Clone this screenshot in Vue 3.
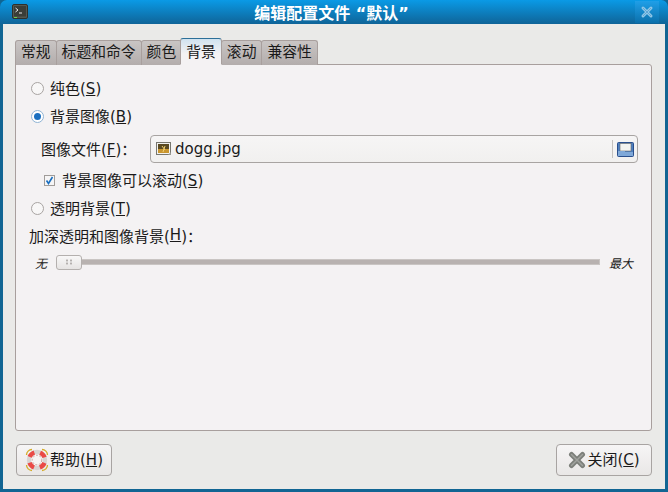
<template>
  <div class="window">
    <div class="titlebar">
      <svg class="term-icon" width="16" height="16" viewBox="0 0 16 16">
        <rect x="0.5" y="0.5" width="15" height="14" rx="1.5" fill="#55584f" stroke="#2e2f2b" />
        <rect x="2" y="2" width="12" height="10.5" fill="#3a3d38" />
        <path d="M3.5 4 L6 6 L3.5 8" fill="none" stroke="#e8e8e8" stroke-width="1" />
        <path d="M7 9 H10" stroke="#e8e8e8" stroke-width="1" />
        <rect x="2" y="13" width="3" height="1" fill="#6fd04a" />
      </svg>
      <div class="title">编辑配置文件 “默认”</div>
      <div class="close-box">
        <svg width="14" height="14" viewBox="0 0 14 14">
          <path d="M3 3 L11 11 M11 3 L3 11" stroke="#8fc6e6" stroke-width="3" stroke-linecap="round" />
          <path d="M3 3 L11 11 M11 3 L3 11" stroke="#5ea6d6" stroke-width="1" />
        </svg>
      </div>
    </div>

    <div class="body">
      <div class="tabs">
        <div
          v-for="t in tabs"
          :key="t"
          class="tab"
          :class="{ active: t === '背景' }"
        >{{ t }}</div>
      </div>

      <div class="panel">
        <div class="row radio-row">
          <span class="radio"></span>
          <span>纯色(<u>S</u>)</span>
        </div>
        <div class="row radio-row">
          <span class="radio on"></span>
          <span>背景图像(<u>B</u>)</span>
        </div>
        <div class="file-row">
          <span class="file-label">图像文件(<u>F</u>)：</span>
          <div class="entry">
            <svg class="pic-icon" width="16" height="16" viewBox="0 0 16 16">
              <rect x="0.5" y="1.5" width="14" height="12" fill="#f2f2f0" stroke="#77776f" />
              <rect x="2" y="3" width="11" height="9" fill="#5a4a22" />
              <rect x="2" y="8" width="11" height="4" fill="#c9962f" />
              <path d="M6 5 L9 9 M9 5 L7 11" stroke="#f0d070" stroke-width="1" />
              <path d="M12 14 L15 14 L15 11 Z" fill="#9a9a94" />
            </svg>
            <span class="file-name">dogg.jpg</span>
            <span class="entry-sep"></span>
            <svg class="folder-icon" width="17" height="15" viewBox="0 0 17 15">
              <rect x="0.5" y="0.5" width="16" height="14" rx="1" fill="#4d7fc0" stroke="#2a4f8c" />
              <rect x="3" y="1.5" width="11" height="7.5" fill="#f3f3f0" stroke="#6a6a66" stroke-width="0.6" />
              <path d="M1 9 H8 V10 H16 V14 H1 Z" fill="#7fa8d8" />
            </svg>
          </div>
        </div>
        <div class="row check-row">
          <svg class="check" width="11" height="11" viewBox="0 0 11 11">
            <rect x="0.5" y="0.5" width="10" height="10" fill="#f6f5f5" stroke="#a09c99" />
            <path d="M2.5 5.5 L4.5 8.5 L8.5 2" fill="none" stroke="#1a6fc0" stroke-width="1.6" />
          </svg>
          <span>背景图像可以滚动(<u>S</u>)</span>
        </div>
        <div class="row radio-row">
          <span class="radio"></span>
          <span>透明背景(<u>T</u>)</span>
        </div>
        <div class="row">加深透明和图像背景(<u>H</u>)：</div>
        <div class="slider-row">
          <span class="mark min">无</span>
          <div class="trough">
            <div class="thumb">
              <span class="grip"></span>
            </div>
          </div>
          <span class="mark max">最大</span>
        </div>
      </div>

      <div class="buttons">
        <button class="btn">
          <svg class="btn-icon" width="24" height="24" viewBox="0 0 24 24">
            <g fill="none" stroke="#d4ac2a" stroke-width="1.3">
              <path d="M1.5 7 A5.5 5.5 0 0 1 7 1.5" />
              <path d="M17 1.5 A5.5 5.5 0 0 1 22.5 7" />
              <path d="M22.5 17 A5.5 5.5 0 0 1 17 22.5" />
              <path d="M7 22.5 A5.5 5.5 0 0 1 1.5 17" />
            </g>
            <circle cx="12" cy="12" r="8" fill="#fff" stroke="#d8d4d2" stroke-width="4.4" />
            <circle cx="12" cy="12" r="8" fill="none" stroke="#ea4a46" stroke-width="4.4" stroke-dasharray="6.6 5.97" stroke-dashoffset="-2.98" />
            <circle cx="12" cy="12" r="4.8" fill="#f6f4f3" stroke="#c08a86" stroke-width="0.8" stroke-dasharray="2 1.5" />
          </svg>
          <span class="btn-text">帮助(<u>H</u>)</span>
        </button>
        <button class="btn">
          <svg class="btn-icon-x" width="18" height="18" viewBox="0 0 18 18">
            <path d="M3.5 3.5 L14.5 14.5 M14.5 3.5 L3.5 14.5" stroke="#7c7f7a" stroke-width="5" stroke-linecap="round" />
            <path d="M3.5 3.5 L14.5 14.5 M14.5 3.5 L3.5 14.5" stroke="#a0a29e" stroke-width="1.5" stroke-linecap="round" />
          </svg>
          <span class="btn-text">关闭(<u>C</u>)</span>
        </button>
      </div>
    </div>
  </div>
</template>

<script setup>
const tabs = ['常规', '标题和命令', '颜色', '背景', '滚动', '兼容性']
</script>

<style>
html,
body {
  margin: 0;
  background: #0f6593;
}
</style>

<style scoped>
.window {
  width: 668px;
  height: 492px;
  box-sizing: border-box;
  display: flex;
  flex-direction: column;
  background: #116593;
  border-radius: 7px 7px 0 0;
  overflow: hidden;
  padding: 0 3px 3px;
  font-family: "DejaVu Sans", "Noto Sans CJK SC", sans-serif;
  font-size: 15px;
  color: #1a1a1a;
}
.titlebar {
  height: 24px;
  flex: none;
  margin: 0 -3px;
  padding: 0 9px 0 12px;
  display: flex;
  align-items: center;
  background: linear-gradient(#0a9ae6, #0f6498);
  position: relative;
}
.term-icon {
  flex: none;
}
.title {
  flex: 1;
  text-align: center;
  color: #fff;
  font-weight: 700;
  font-size: 16px;
}
.close-box {
  width: 24px;
  height: 22px;
  display: flex;
  align-items: center;
  justify-content: center;
  background: linear-gradient(#1f9fe8, #0b70ab);
}
.body {
  flex: 1;
  background: #eaeae8;
  display: flex;
  flex-direction: column;
  padding: 14px 13px 0 12px;
  min-height: 0;
}
.tabs {
  display: flex;
  height: 27px;
  align-items: flex-end;
  position: relative;
  z-index: 1;
  margin-bottom: -1px;
}
.tab {
  height: 25px;
  box-sizing: border-box;
  padding: 0 5px;
  line-height: 22px;
  font-size: 14.8px;
  background: linear-gradient(#c9c5c4, #b3adac);
  border: 1px solid #a89f9d;
  border-bottom: none;
  border-radius: 3px 3px 0 0;
  margin-right: -1px;
  white-space: nowrap;
}
.tab.active {
  height: 27px;
  line-height: 25px;
  background: linear-gradient(#d0e2ef, #f4f2f3 60%);
  border-color: #2c6f98 #a89f9d #f4f2f3;
  margin-left: -1px;
  position: relative;
  z-index: 2;
  border-bottom: 1px solid #f4f2f3;
}
.panel {
  flex: 1;
  background: #f4f2f3;
  border: 1px solid #a89f9d;
  border-radius: 0 3px 3px 3px;
  padding: 9px 13px 0;
  display: flex;
  flex-direction: column;
}
.row {
  height: 28px;
  box-sizing: border-box;
  padding-bottom: 2px;
  display: flex;
  align-items: center;
  white-space: pre;
}
.radio-row {
  padding-left: 2px;
  gap: 6px;
}
.radio {
  width: 11px;
  height: 11px;
  margin-top: 2px;
  border-radius: 50%;
  background: #f8f7f7;
  border: 1px solid #a8a4a2;
  display: inline-block;
  position: relative;
  flex: none;
}
.radio.on {
  border-color: #8fb4d4;
  background: #fff;
}
.radio.on::after {
  content: "";
  position: absolute;
  left: 2px;
  top: 2px;
  width: 7px;
  height: 7px;
  border-radius: 50%;
  background: #1a6fc0;
}
.file-row {
  height: 28px;
  margin-top: 5px;
  padding-left: 12px;
  display: flex;
  align-items: center;
}
.file-label {
  width: 109px;
  flex: none;
  white-space: pre;
  padding-bottom: 2px;
}
.entry {
  flex: 1;
  height: 28px;
  box-sizing: border-box;
  border: 1px solid #a8a4a2;
  border-radius: 4px;
  background: linear-gradient(#f6f5f5, #f1f0ef);
  display: flex;
  align-items: center;
  padding: 0 3px 0 5px;
}
.pic-icon {
  flex: none;
}
.file-name {
  flex: 1;
  margin-left: 3px;
}
.entry-sep {
  width: 1px;
  height: 18px;
  background: #c4c1be;
  margin-right: 4px;
}
.check-row {
  margin-top: 3px;
  padding-left: 15px;
  gap: 7px;
}
.check {
  flex: none;
  margin-top: 2px;
}
.slider-row {
  height: 24px;
  display: flex;
  align-items: center;
  padding-left: 6px;
}
.mark {
  font-size: 12px;
  font-style: italic;
  flex: none;
}
.min {
  width: 21px;
}
.max {
  padding-left: 9px;
}
.trough {
  width: 542px;
  height: 4px;
  flex: none;
  background: #b8b2b0;
  border: 1px solid #c9c5c3;
  position: relative;
  display: flex;
  align-items: center;
}
.thumb {
  width: 26px;
  height: 15px;
  box-sizing: border-box;
  border: 1px solid #b4b0ae;
  border-radius: 3px;
  background: linear-gradient(#f8f7f7, #e6e4e3);
  position: absolute;
  left: -1px;
  display: flex;
  align-items: center;
  justify-content: center;
}
.grip {
  width: 8px;
  height: 6px;
  background-image: radial-gradient(circle, #b4b0ae 1px, transparent 1.2px);
  background-size: 4px 3px;
}
.buttons {
  height: 58px;
  flex: none;
  display: flex;
  justify-content: space-between;
  padding: 13px 0 0 1px;
  box-sizing: border-box;
}
.btn {
  width: 96px;
  height: 32px;
  padding: 0;
  box-sizing: border-box;
  border: 1px solid #a8a4a2;
  border-radius: 4px;
  background: linear-gradient(#f6f5f5, #e9e7e6);
  display: flex;
  align-items: center;
  justify-content: center;
  gap: 1px;
  font-family: inherit;
  font-size: 15px;
  color: #1a1a1a;
}
.btn-text {
  padding-bottom: 3px;
}
.btn-icon,
.btn-icon-x {
  flex: none;
}
</style>
